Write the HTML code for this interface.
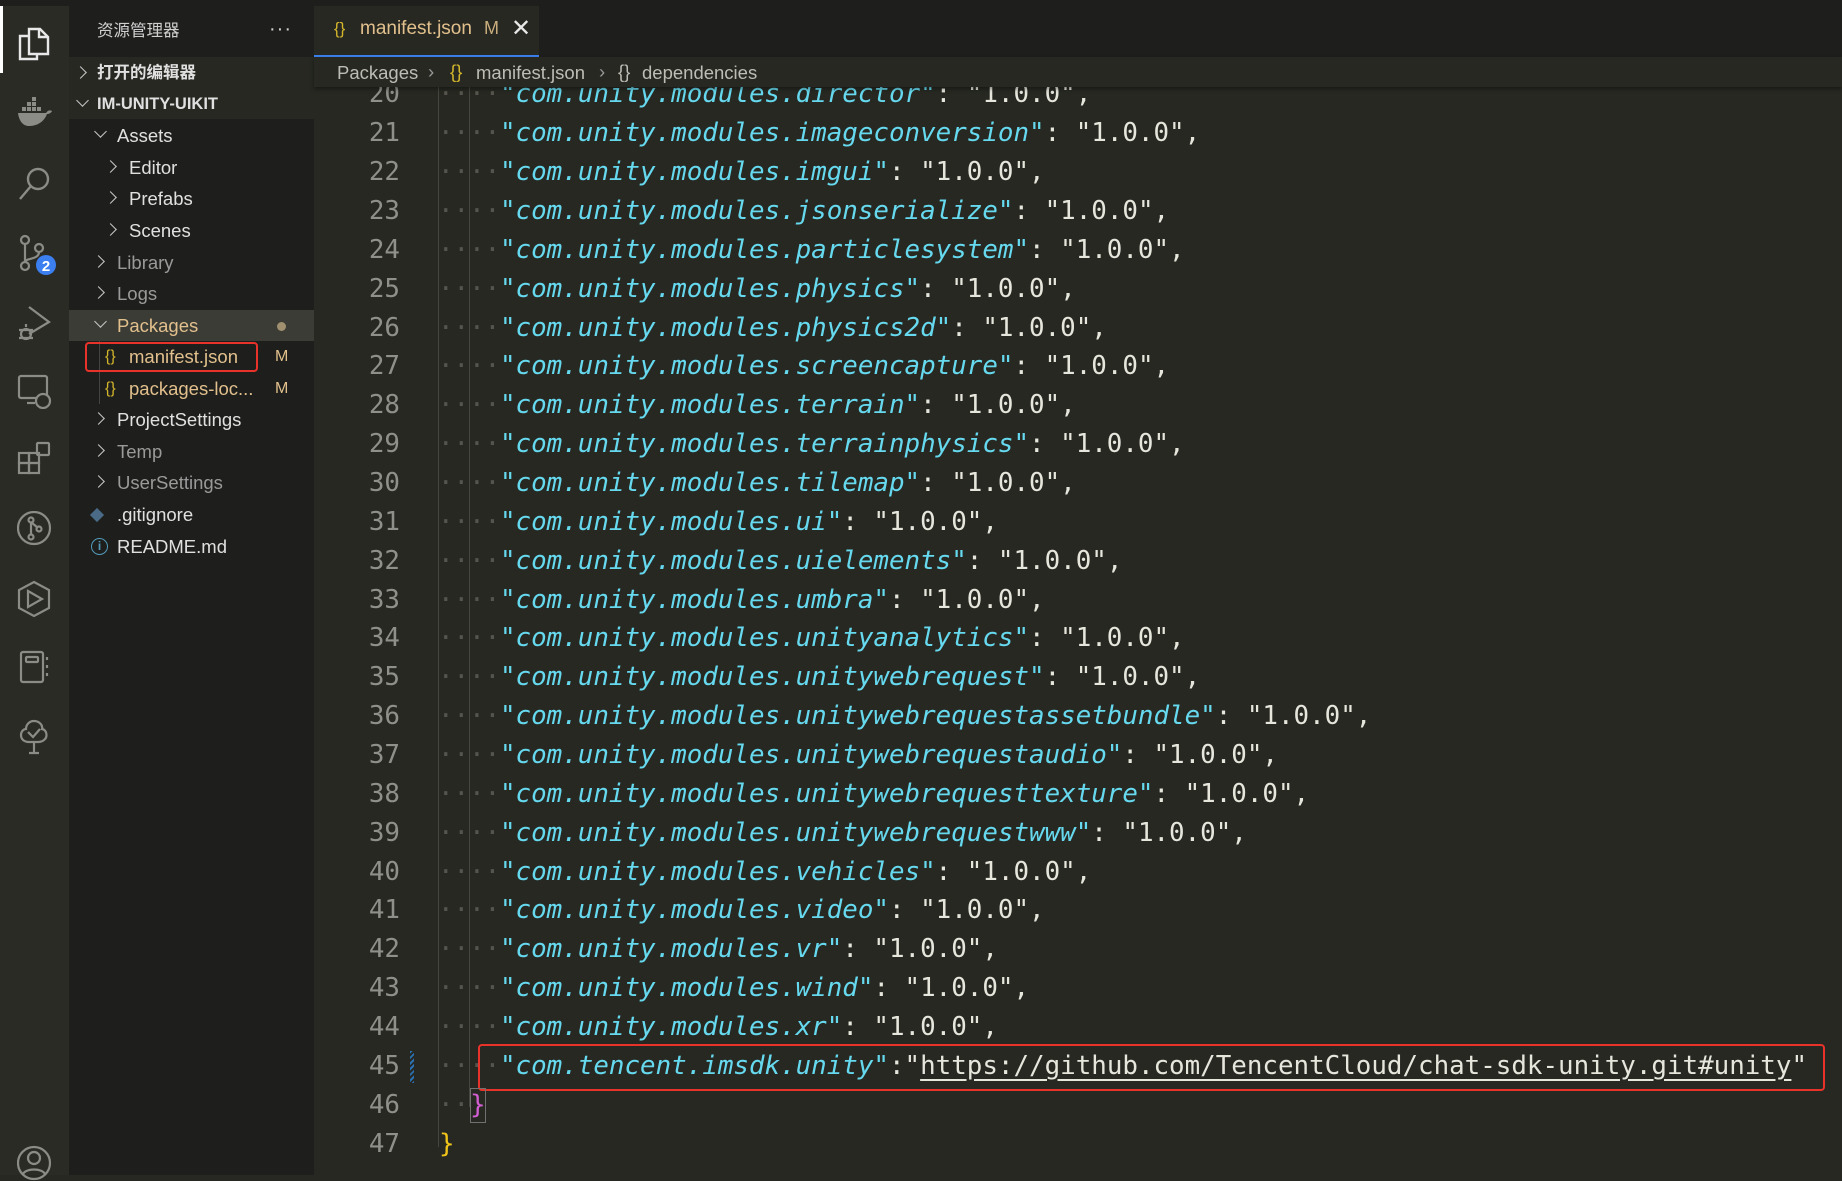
<!DOCTYPE html>
<html><head><meta charset="utf-8"><style>
*{margin:0;padding:0;box-sizing:border-box}
body{width:1842px;height:1175px;overflow:hidden;background:#272822;position:relative;font-family:"Liberation Sans","Noto Sans CJK SC",sans-serif}
.abs{position:absolute}
#top{left:0;top:0;width:1842px;height:6px;background:#1e1f1c}
#act{left:0;top:6px;width:69px;height:1169px;background:#2a2b25}
#act svg{position:absolute;left:17px}
#side{left:69px;top:6px;width:245px;height:1169px;background:#1e1f1c}
.row{position:absolute;left:0;width:245px;height:31px;line-height:31px;font-size:18.5px;color:#e0e0e0;white-space:nowrap}
.chev{position:absolute;top:10px;width:9px;height:9px;border-right:1.6px solid #c8c8c8;border-bottom:1.6px solid #c8c8c8;transform:rotate(-45deg)}
.chev.o{transform:rotate(45deg);top:7px}
#tabbar{left:314px;top:6px;width:1528px;height:51px;background:#1e1f1c}
#tab{left:314px;top:6px;width:225px;height:51px;background:#272822;border-bottom:2px solid #3c82f0}
#bc{left:314px;top:57px;width:1528px;height:30px;background:#272822;font-size:18.5px;color:#bdbdb5;line-height:30px;z-index:3;box-shadow:0 2px 4px rgba(0,0,0,.4)}
#code{left:314px;top:87px;width:1528px;height:1088px;overflow:hidden}
.ln{position:absolute;left:0;width:86px;text-align:right;font-family:"DejaVu Sans Mono",monospace;font-size:25.85px;color:#90908a;height:39px;line-height:39px}
.cl{position:absolute;left:186px;font-family:"DejaVu Sans Mono",monospace;font-size:25.85px;color:#e6e6dc;white-space:pre;height:39px;line-height:39px}
.k{color:#66d9ef;font-style:italic}
.d{position:absolute;color:#55554d;font-family:"DejaVu Sans Mono",monospace;font-size:25.85px;height:39px;line-height:39px;white-space:pre}
.y{color:#d4b62c}
</style></head><body>
<div id="top" class="abs"></div>
<div id="act" class="abs">
<div class="abs" style="left:0;top:0;width:3px;height:67px;background:#fff"></div>
<svg style="top:18px" width="34" height="38" viewBox="0 0 34 38" fill="none" stroke="#e8e8e8" stroke-width="2.4"><path d="M12 5h11l8 8v17H12z"/><path d="M22 5v8h9"/><path d="M12 12H3v23h17v-5"/></svg>
<svg style="top:90px" width="36" height="32" viewBox="0 0 36 32" fill="#8c8c86"><rect x="10" y="6" width="4" height="4"/><rect x="15" y="6" width="4" height="4"/><rect x="15" y="1" width="4" height="4"/><rect x="5" y="11" width="4" height="4"/><rect x="10" y="11" width="4" height="4"/><rect x="15" y="11" width="4" height="4"/><rect x="20" y="11" width="4" height="4"/><path d="M1 17h28c2-3 4-3 6-2-1 2-3 3-5 3-3 8-10 12-18 12C6 30 2 25 1 17z"/></svg>
<svg style="top:160px" width="36" height="36" viewBox="0 0 36 36" fill="none" stroke="#8c8c86" stroke-width="2.4"><circle cx="21" cy="13" r="10"/><path d="M14 20L3 33"/></svg>
<svg style="top:228px" width="44" height="46" viewBox="0 0 44 46" fill="none" stroke="#8c8c86" stroke-width="2.2"><circle cx="8" cy="6" r="4"/><circle cx="22" cy="14" r="4"/><circle cx="8" cy="32" r="4"/><path d="M8 10v18M22 18c0 8-14 6-14 10"/><circle cx="29" cy="31" r="10" fill="#3b7ff0" stroke="none"/><text x="29" y="37" fill="#fff" stroke="none" font-size="15" font-weight="bold" text-anchor="middle" font-family="Liberation Sans">2</text></svg>
<svg style="top:298px" width="36" height="38" viewBox="0 0 36 38" fill="none" stroke="#8c8c86" stroke-width="2.2"><path d="M12 3l20 15-20 12"/><circle cx="9" cy="30" r="5"/><path d="M2 26h14M2 34h14M9 23v-3"/></svg>
<svg style="top:367px" width="36" height="36" viewBox="0 0 36 36" fill="none" stroke="#8c8c86" stroke-width="2.2"><rect x="2" y="3" width="28" height="22" rx="2"/><path d="M10 30h8"/><circle cx="26" cy="28" r="7" fill="#2a2b25"/></svg>
<svg style="top:435px" width="36" height="36" viewBox="0 0 36 36" fill="none" stroke="#8c8c86" stroke-width="2.2"><rect x="2" y="12" width="10" height="10"/><rect x="12" y="12" width="10" height="10"/><rect x="2" y="22" width="10" height="10"/><rect x="12" y="22" width="10" height="10"/><rect x="20" y="2" width="12" height="12" rx="1"/></svg>
<svg style="top:505px" width="36" height="36" viewBox="0 0 36 36" fill="none" stroke="#8c8c86" stroke-width="2.2"><circle cx="17" cy="17" r="16"/><circle cx="14" cy="9" r="2.5"/><circle cx="14" cy="26" r="2.5"/><circle cx="22" cy="18" r="2.5"/><path d="M14 11v13M14 11l7 6"/></svg>
<svg style="top:574px" width="36" height="38" viewBox="0 0 36 38" fill="none" stroke="#8c8c86" stroke-width="2.2"><path d="M17 2l15 8v18l-15 8-15-8V10z"/><path d="M11 11l14 8-14 8z"/></svg>
<svg style="top:643px" width="36" height="36" viewBox="0 0 36 36" fill="none" stroke="#8c8c86" stroke-width="2.2"><rect x="4" y="3" width="22" height="30" rx="2"/><rect x="9" y="8" width="12" height="5" rx="1"/><path d="M30 8v3M30 16v3M30 24v3"/></svg>
<svg style="top:712px" width="36" height="38" viewBox="0 0 36 38" fill="none" stroke="#8c8c86" stroke-width="2.2"><path d="M17 3c6 0 9 5 8 8 5 1 6 8 2 11-2 2-5 2-8 2H12c-4 0-8-2-8-7 0-4 3-6 5-6 0-4 3-8 8-8z"/><path d="M17 24v10M12 35h10M11 14l5 5 7-8"/></svg>
<svg style="top:1138px" width="36" height="37" viewBox="0 0 36 37" fill="none" stroke="#8c8c86" stroke-width="2.2"><circle cx="17" cy="19" r="16"/><circle cx="17" cy="14" r="6"/><path d="M6 30c3-6 19-6 22 0"/></svg>
</div>

<div id="side" class="abs">
<div class="row" style="top:9px;height:32px;line-height:32px;left:28px;font-size:16.5px;color:#cfcfcf">资源管理器</div>
<div class="row" style="top:9px;height:32px;line-height:28px;left:200px;width:30px;color:#cfcfcf;font-size:20px;letter-spacing:1px">···</div>
<div class="abs" style="left:0;top:51px;width:245px;height:62px;background:#272822"></div>
<div class="row" style="top:52px;font-weight:bold;font-size:16.5px"><span class="chev" style="left:7px"></span><span style="position:absolute;left:28px">打开的编辑器</span></div>
<div class="row" style="top:83px;font-weight:bold;font-size:16.5px"><span class="chev o" style="left:9px"></span><span style="position:absolute;left:28px">IM-UNITY-UIKIT</span></div>
<div class="row" style="top:114px"><span class="chev o" style="left:27px"></span><span style="position:absolute;left:48px">Assets</span></div>
<div class="row" style="top:146px"><span class="chev" style="left:37px"></span><span style="position:absolute;left:60px">Editor</span></div>
<div class="row" style="top:177px"><span class="chev" style="left:37px"></span><span style="position:absolute;left:60px">Prefabs</span></div>
<div class="row" style="top:209px"><span class="chev" style="left:37px"></span><span style="position:absolute;left:60px">Scenes</span></div>
<div class="row" style="top:241px;color:#9a9a9a"><span class="chev" style="left:25px"></span><span style="position:absolute;left:48px">Library</span></div>
<div class="row" style="top:272px;color:#9a9a9a"><span class="chev" style="left:25px"></span><span style="position:absolute;left:48px">Logs</span></div>
<div class="row" style="top:304px;background:#3b3c36;color:#e2c08d"><span class="chev o" style="left:27px"></span><span style="position:absolute;left:48px">Packages</span><span style="position:absolute;left:208px;top:12px;width:9px;height:9px;border-radius:50%;background:#a09070"></span></div>
<div class="abs" style="left:30px;top:335px;width:1px;height:63px;background:#444"></div>
<div class="row" style="top:335px;color:#e2c08d"><span class="y" style="position:absolute;left:36px;font-size:16px">{}</span><span style="position:absolute;left:60px">manifest.json</span><span style="position:absolute;left:206px;font-size:16px">M</span></div>
<div class="abs" style="left:16px;top:336px;width:173px;height:30px;border:2.5px solid #e8322a;border-radius:4px"></div>
<div class="row" style="top:367px;color:#e2c08d"><span class="y" style="position:absolute;left:36px;font-size:16px">{}</span><span style="position:absolute;left:60px">packages-loc...</span><span style="position:absolute;left:206px;font-size:16px">M</span></div>
<div class="row" style="top:398px"><span class="chev" style="left:25px"></span><span style="position:absolute;left:48px">ProjectSettings</span></div>
<div class="row" style="top:430px;color:#9a9a9a"><span class="chev" style="left:25px"></span><span style="position:absolute;left:48px">Temp</span></div>
<div class="row" style="top:461px;color:#9a9a9a"><span class="chev" style="left:25px"></span><span style="position:absolute;left:48px">UserSettings</span></div>
<div class="row" style="top:493px"><span style="position:absolute;left:23px;top:11px;width:10px;height:10px;background:#4b6a86;transform:rotate(45deg)"></span><span style="position:absolute;left:48px">.gitignore</span></div>
<div class="row" style="top:525px"><span style="position:absolute;left:22px;top:7px;width:17px;height:17px;border:1.8px solid #519aba;border-radius:50%;color:#519aba;font-size:12px;line-height:14px;text-align:center;font-weight:bold">i</span><span style="position:absolute;left:48px">README.md</span></div>
</div>

<div id="tabbar" class="abs"></div>
<div id="tab" class="abs">
<span class="abs y" style="left:20px;top:13px;font-size:17px">{}</span>
<span class="abs" style="left:46px;top:12px;font-size:19px;color:#e2c08d">manifest.json</span>
<span class="abs" style="left:170px;top:12px;font-size:18px;color:#c9ad7c">M</span>
<span class="abs" style="left:197px;top:8px;font-size:24px;color:#e8e8e8">✕</span>
</div>
<div id="bc" class="abs"><span style="position:absolute;left:23px;top:1px">Packages</span><span style="position:absolute;left:114px;color:#999">›</span><span class="y" style="position:absolute;left:136px">{}</span><span style="position:absolute;left:162px;top:1px">manifest.json</span><span style="position:absolute;left:285px;color:#999">›</span><span style="position:absolute;left:304px">{}</span><span style="position:absolute;left:328px;top:1px">dependencies</span></div>

<div id="code" class="abs">
<div class="abs" style="left:124px;top:0;width:1px;height:1060px;background:#46463f"></div>
<div class="abs" style="left:155px;top:0;width:1px;height:1020px;background:#46463f"></div>
<div id="lines"></div>
</div>
<script>
(function(){
var keys=["director","imageconversion","imgui","jsonserialize","particlesystem","physics","physics2d","screencapture","terrain","terrainphysics","tilemap","ui","uielements","umbra","unityanalytics","unitywebrequest","unitywebrequestassetbundle","unitywebrequestaudio","unitywebrequesttexture","unitywebrequestwww","vehicles","video","vr","wind","xr"];
var h="";
function ty(n){return +(133.7+(n-21)*38.86-19.5-87).toFixed(1);}
keys.forEach(function(k,i){var n=20+i;
h+='<div class="ln" style="top:'+ty(n)+'px">'+n+'</div><div class="d" style="left:124px;top:'+ty(n)+'px">····</div><div class="cl" style="top:'+ty(n)+'px"><span class="k">"com.unity.modules.'+k+'"</span>: "1.0.0",</div>';});
h+='<div class="ln" style="top:'+ty(45)+'px">45</div><div class="abs" style="left:96px;top:'+(ty(45)+4)+'px;width:4px;height:32px;background:repeating-linear-gradient(135deg,#2a6fb0 0 2px,transparent 2px 4px)"></div><div class="d" style="left:124px;top:'+ty(45)+'px">····</div><div class="cl" style="top:'+ty(45)+'px"><span class="k">"com.tencent.imsdk.unity"</span>:"<span style="text-decoration:underline;text-underline-offset:5px">https://github.com/TencentCloud/chat-sdk-unity.git#unity</span>"</div>';
h+='<div class="abs" style="left:164px;top:'+(ty(45)-3)+'px;width:1347px;height:47px;border:2.5px solid #e8322a;border-radius:4px"></div>';
h+='<div class="ln" style="top:'+ty(46)+'px">46</div><div class="d" style="left:124px;top:'+ty(46)+'px">··</div><div class="cl" style="left:156px;top:'+ty(46)+'px;color:#d25ed2">}</div><div class="abs" style="left:156px;top:'+(ty(46)+2)+'px;width:16px;height:35px;border:1px solid #707070"></div>';
h+='<div class="ln" style="top:'+ty(47)+'px">47</div><div class="cl" style="left:125px;top:'+ty(47)+'px;color:#f0c419">}</div>';
document.getElementById('lines').innerHTML=h;
})();
</script>
</body></html>
